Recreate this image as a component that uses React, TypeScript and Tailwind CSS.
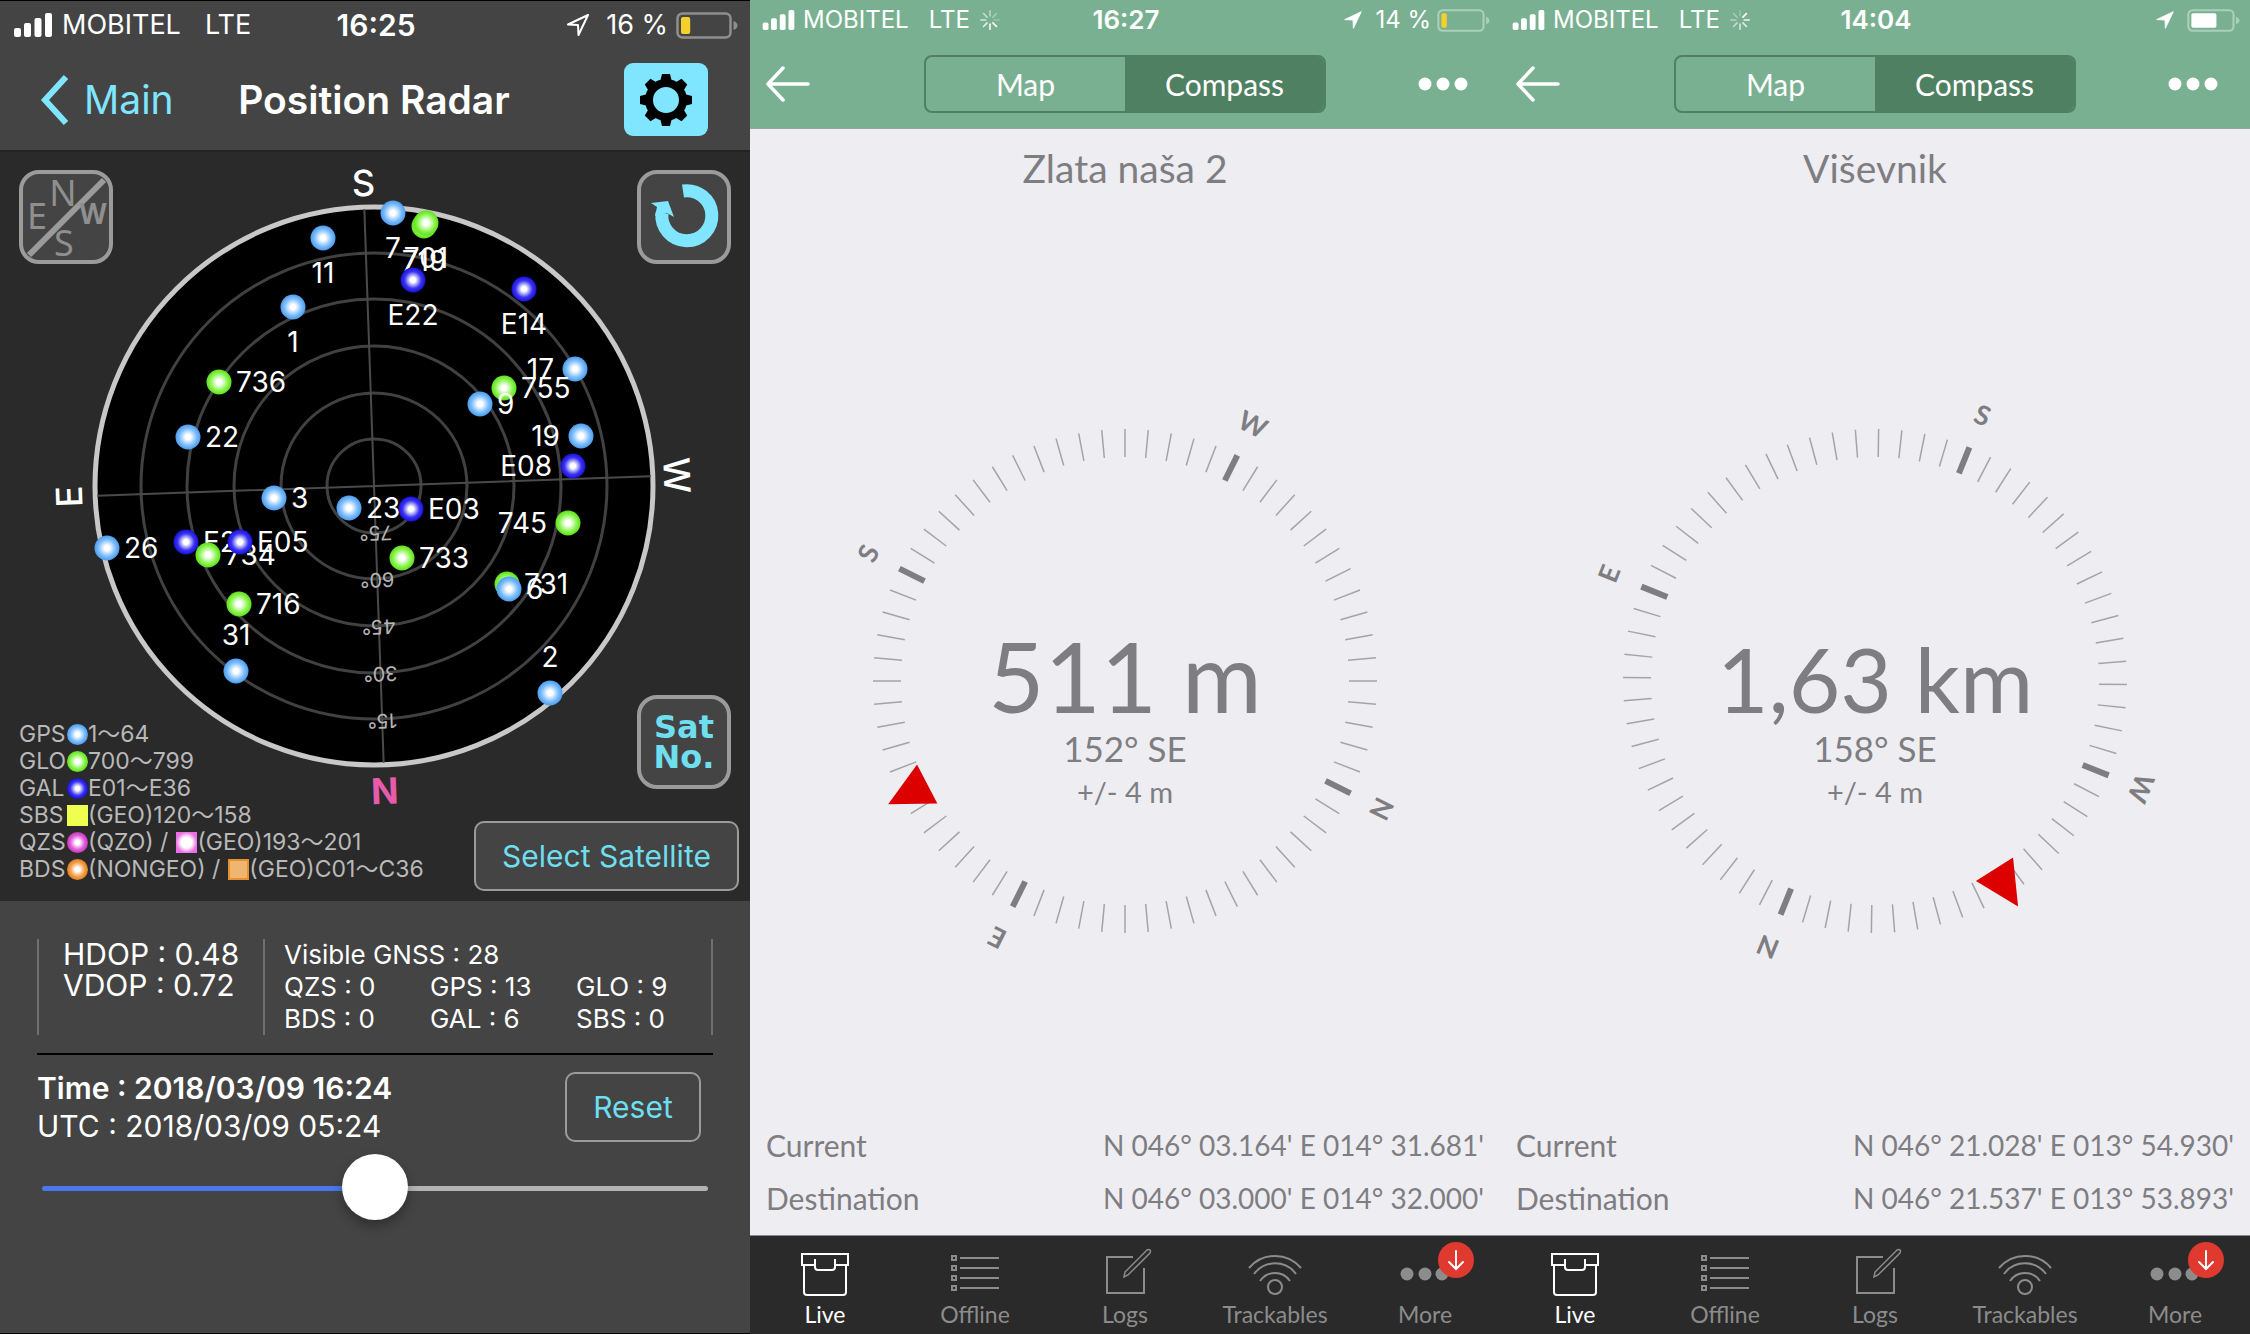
import type { ReactNode } from 'react'

type Kind = 'gps' | 'glo' | 'gal'
type Side = 'left' | 'right' | 'above' | 'below'

interface Satellite {
  id: string
  kind: Kind
  x: number
  y: number
  side: Side
}

// Painted in this order, later ones cover earlier ones
const satellites: Satellite[] = [
  { id: '7', kind: 'gps', x: 393, y: 61, side: 'below' },
  { id: '719', kind: 'glo', x: 424, y: 74, side: 'below' },
  { id: '701', kind: 'glo', x: 426, y: 71, side: 'below' },
  { id: 'E22', kind: 'gal', x: 413, y: 128, side: 'below' },
  { id: '11', kind: 'gps', x: 323, y: 86, side: 'below' },
  { id: 'E14', kind: 'gal', x: 524, y: 137, side: 'below' },
  { id: '1', kind: 'gps', x: 293, y: 155, side: 'below' },
  { id: '736', kind: 'glo', x: 219, y: 230, side: 'right' },
  { id: '22', kind: 'gps', x: 188, y: 285, side: 'right' },
  { id: '17', kind: 'gps', x: 575, y: 217, side: 'left' },
  { id: '755', kind: 'glo', x: 504, y: 236, side: 'right' },
  { id: '9', kind: 'gps', x: 480, y: 252, side: 'right' },
  { id: '19', kind: 'gps', x: 581, y: 284, side: 'left' },
  { id: 'E08', kind: 'gal', x: 573, y: 314, side: 'left' },
  { id: '3', kind: 'gps', x: 274, y: 346, side: 'right' },
  { id: '23', kind: 'gps', x: 349, y: 356, side: 'right' },
  { id: 'E03', kind: 'gal', x: 411, y: 357, side: 'right' },
  { id: '745', kind: 'glo', x: 568, y: 371, side: 'left' },
  { id: '26', kind: 'gps', x: 107, y: 396, side: 'right' },
  { id: 'E21', kind: 'gal', x: 186, y: 390, side: 'right' },
  { id: '734', kind: 'glo', x: 208, y: 403, side: 'right' },
  { id: 'E05', kind: 'gal', x: 240, y: 390, side: 'right' },
  { id: '733', kind: 'glo', x: 402, y: 406, side: 'right' },
  { id: '731', kind: 'glo', x: 507, y: 432, side: 'right' },
  { id: '6', kind: 'gps', x: 509, y: 437, side: 'right' },
  { id: '716', kind: 'glo', x: 239, y: 452, side: 'right' },
  { id: '31', kind: 'gps', x: 236, y: 519, side: 'above' },
  { id: '2', kind: 'gps', x: 550, y: 541, side: 'above' },
]

const fills: Record<Kind, string> = {
  gps: 'url(#gps)',
  glo: 'url(#glo)',
  gal: 'url(#gal)',
}

function SatelliteMark({ id, kind, x, y, side }: Satellite) {
  const dx = side === 'left' ? -21 : side === 'right' ? 17 : 0
  const dy = side === 'above' ? -26 : side === 'below' ? 45 : 10
  const anchor = side === 'left' ? 'end' : side === 'right' ? 'start' : 'middle'
  return (
    <g>
      <circle cx={x} cy={y} r="12.5" fill={fills[kind]} />
      <text x={x + dx} y={y + dy} textAnchor={anchor} fontSize="28" fill="#fff">
        {id}
      </text>
    </g>
  )
}

function Glow({ id, edge, mid }: { id: string; edge: string; mid: string }) {
  return (
    <radialGradient id={id}>
      <stop offset="0.2" stopColor="#fff" />
      <stop offset="0.68" stopColor={mid} />
      <stop offset="1" stopColor={edge} />
    </radialGradient>
  )
}

function Radar() {
  return (
    <svg viewBox="0 0 750 749" className="block w-full" role="img" aria-label="Satellite positions">
      <defs>
        <Glow id="gps" edge="#4a9cf0" mid="#7dbdfb" />
        <Glow id="glo" edge="#5ee01c" mid="#8cf551" />
        <Glow id="gal" edge="#1a10d8" mid="#3a33f2" />
      </defs>
      <g transform="translate(374 334)">
        <circle r="279" fill="#000" stroke="#c8c8c8" strokeWidth="5" />
        <g fill="none" stroke="#414141" strokeWidth="3">
          {[47, 93, 140, 187, 233].map(r => (
            <circle key={r} r={r} />
          ))}
        </g>
        {/* North points down, two degrees off the vertical */}
        <g transform="rotate(178)" textAnchor="middle">
          <path d="M0-277V277M-277 0H277" stroke="#4a4a4a" strokeWidth="2" />
          {[75, 60, 45, 30, 15].map((deg, i) => (
            <text key={deg} y={-40 - i * 47} fontSize="20" fill="#b4b4b4">
              {deg}°
            </text>
          ))}
        </g>
        <g fontSize="36" fill="#fff" textAnchor="middle" fontWeight="500">
          <text transform="rotate(-2)" y="-290">S</text>
          <text transform="rotate(-92)" y="-292">E</text>
          <text transform="rotate(88)" y="-290">W</text>
          <text transform="rotate(178)" y="-292" fill="#e65bab" fontWeight="700">N</text>
        </g>
      </g>
      {satellites.map(s => (
        <SatelliteMark key={s.id} {...s} />
      ))}
    </svg>
  )
}

function Signal({ className }: { className: string }) {
  return (
    <svg viewBox="0 0 38 24" className={className} fill="currentColor" aria-hidden="true">
      <rect x="0" y="15" width="7" height="9" rx="2" />
      <rect x="10" y="10" width="7" height="14" rx="2" />
      <rect x="20.500" y="5" width="7" height="19" rx="2" />
      <rect x="31" y="0" width="7" height="24" rx="2" />
    </svg>
  )
}

function Battery({ level, color, frame, className }: { level: number; color: string; frame: string; className: string }) {
  return (
    <svg viewBox="0 0 62 27" className={className} aria-hidden="true">
      <rect x="1.500" y="1.500" width="53" height="24" rx="5" fill="none" stroke={frame} strokeWidth="2.500" />
      <path d="M57.500 9v9c2.500-1 4-2.500 4-4.500s-1.500-3.500-4-4.500z" fill={frame} />
      <rect x="5" y="5" width={46 * level} height="17" rx="2" fill={color} />
    </svg>
  )
}

function LocationArrow({ filled, className }: { filled?: boolean; className: string }) {
  return (
    <svg viewBox="0 0 24 24" className={className} aria-hidden="true">
      <path
        d="M22 2 2 11.500l10 .5.500 10z"
        fill={filled ? 'currentColor' : 'none'}
        stroke="currentColor"
        strokeWidth={filled ? 1 : 2}
        strokeLinejoin="round"
      />
    </svg>
  )
}

function Spinner({ turn }: { turn: number }) {
  return (
    <svg viewBox="-12 -12 24 24" className="ml-2.5 size-5" aria-hidden="true">
      {[0, 1, 2, 3, 4, 5, 6, 7].map(i => (
        <path
          key={i}
          d="M0-5V-11"
          transform={`rotate(${i * 45 + turn})`}
          stroke="#fff"
          strokeWidth="2"
          strokeLinecap="round"
          opacity={1 - i * 0.11}
        />
      ))}
    </svg>
  )
}

function SquareButton({ label, children }: { label: string; children: ReactNode }) {
  return (
    <button
      type="button"
      aria-label={label}
      className="pointer-events-auto size-[94px] shrink-0 rounded-[20px] border-4 border-[#9b9b9b] bg-[#444444]"
    >
      {children}
    </button>
  )
}

function Dot({ className }: { className: string }) {
  return <span className={`inline-block size-[21px] shrink-0 ${className}`} />
}

function LegendRow({ name, children }: { name: string; children: ReactNode }) {
  return (
    <li className="flex items-center">
      <span className="w-12">{name}</span>
      {children}
    </li>
  )
}

function Legend() {
  return (
    <ul className="mb-2 text-[23px] leading-[27px] text-[#b9b9b9]">
      <LegendRow name="GPS">
        <Dot className="rounded-full bg-[radial-gradient(closest-side,#fff_20%,#7dbdfb_68%,#4a9cf0)]" />
        <span>1〜64</span>
      </LegendRow>
      <LegendRow name="GLO">
        <Dot className="rounded-full bg-[radial-gradient(closest-side,#fff_20%,#8cf551_68%,#5ee01c)]" />
        <span>700〜799</span>
      </LegendRow>
      <LegendRow name="GAL">
        <Dot className="rounded-full bg-[radial-gradient(closest-side,#fff_20%,#3a33f2_68%,#1a10d8)]" />
        <span>E01〜E36</span>
      </LegendRow>
      <LegendRow name="SBS">
        <Dot className="bg-[#eeff50]" />
        <span>(GEO)120〜158</span>
      </LegendRow>
      <LegendRow name="QZS">
        <Dot className="rounded-full bg-[radial-gradient(closest-side,#fff_20%,#e55bdc_68%,#c03cb8)]" />
        <span>(QZO) /</span>
        <Dot className="ml-2 bg-[radial-gradient(closest-side,#fff_50%,#ec6fe4)]" />
        <span>(GEO)193〜201</span>
      </LegendRow>
      <LegendRow name="BDS">
        <Dot className="rounded-full bg-[radial-gradient(closest-side,#fff_20%,#f3a04a_68%,#e08020)]" />
        <span>(NONGEO) /</span>
        <Dot className="ml-2 border-2 border-[#e8902e] bg-[#efb672]" />
        <span>(GEO)C01〜C36</span>
      </LegendRow>
    </ul>
  )
}

function RadarPhone() {
  return (
    <section className="flex flex-col border-y border-black bg-[#444444] font-['Inter','Noto_Sans_CJK_JP',sans-serif] text-white">
      <header className="border-b-2 border-[#222222]">
        <div className="grid grid-cols-[1fr_auto_1fr] items-center pt-1.5 pr-3 pl-3.5 text-[27px] leading-9">
          <div className="flex items-center">
            <Signal className="mr-2.5 h-6 w-[38px]" />
            <span>MOBITEL</span>
            <span className="ml-6">LTE</span>
          </div>
          <span className="text-[30px] font-semibold">16:25</span>
          <div className="flex items-center justify-end">
            <LocationArrow className="mr-4 size-6" />
            <span>16 %</span>
            <Battery level={0.2} color="#f5cf2b" frame="#8f8f8f" className="ml-2 h-[27px] w-[62px]" />
          </div>
        </div>
        <div className="grid grid-cols-[1fr_auto_1fr] items-center pt-5 pr-[42px] pb-3.5 pl-10">
          <button type="button" className="flex items-center gap-4 text-[39px] leading-12 text-[#80e5ff]">
            <svg viewBox="0 0 28 50" className="h-[50px] w-7" fill="none" stroke="currentColor" strokeWidth="6" aria-hidden="true">
              <path d="M26 2 5 25l21 23" />
            </svg>
            Main
          </button>
          <h1 className="text-[39px] leading-12 font-semibold">Position Radar</h1>
          <button
            type="button"
            aria-label="Settings"
            className="flex h-[73px] w-[84px] items-center justify-center justify-self-end rounded-[9px] bg-[#80e5ff]"
          >
            <svg viewBox="-26 -26 52 52" className="size-[52px]" aria-hidden="true">
              <circle r="17" fill="none" stroke="#000" strokeWidth="8" />
              {[0, 45, 90, 135, 180, 225, 270, 315].map(a => (
                <path key={a} d="M-6-18-4-26H4L6-18z" transform={`rotate(${a})`} />
              ))}
            </svg>
          </button>
        </div>
      </header>

      <div className="relative bg-[#2a2a2a]">
        <Radar />
        <div className="pointer-events-none absolute inset-0 flex flex-col justify-between pt-[18px] pr-[19px] pb-2.5 pl-[19px]">
          <div className="flex justify-between">
            <SquareButton label="Compass orientation">
              <svg viewBox="0 0 86 86" className="size-full font-['Noto_Sans',sans-serif]" fill="#8f8f8f" textAnchor="middle" aria-hidden="true">
                <path d="M6 81 81 6" stroke="#9b9b9b" strokeWidth="6" />
                <text x="40" y="32" fontSize="36">N</text>
                <text x="14" y="55" fontSize="36">E</text>
                <text x="41" y="82" fontSize="36">S</text>
                <text x="70" y="50" fontSize="28" fontWeight="700">W</text>
              </svg>
            </SquareButton>
            <SquareButton label="Reload">
              <svg viewBox="0 0 86 86" className="size-full" aria-hidden="true">
                <path d="M42 17A25 25 0 1 1 21 39" fill="none" stroke="#80e5ff" strokeWidth="13" />
                <path d="M10 29 27 27 33 43 26 39 14 42 16 33z" fill="#80e5ff" />
              </svg>
            </SquareButton>
          </div>
          <div>
            <div className="flex items-start justify-end">
              <SquareButton label="Sat No.">
                <span className="block font-['DejaVu_Sans',sans-serif] text-[32px] leading-[30px] font-bold text-[#6fdff0]">
                  Sat
                  <br />
                  No.
                </span>
              </SquareButton>
            </div>
            <div className="-mt-[68px] flex items-end justify-between">
              <Legend />
              <button
                type="button"
                className="pointer-events-auto -mr-2 h-[70px] w-[265px] shrink-0 rounded-[10px] border-2 border-[#9b9b9b] bg-[#444444] text-[30px] text-[#6fdff0]"
              >
                Select Satellite
              </button>
            </div>
          </div>
        </div>
      </div>

      <div className="px-[37px] pt-[38px]">
        <div className="grid grid-cols-[224px_1fr] border-x-2 border-[#707070]">
          <div className="pl-6 text-[30px] leading-[31px]">
            <p>HDOP : 0.48</p>
            <p>VDOP : 0.72</p>
          </div>
          <div className="grid grid-cols-[146px_146px_1fr] border-l-2 border-[#707070] pl-[19px] text-[26px] leading-8">
            <p className="col-span-3">Visible GNSS : 28</p>
            <p>QZS : 0</p>
            <p>GPS : 13</p>
            <p>GLO : 9</p>
            <p>BDS : 0</p>
            <p>GAL : 6</p>
            <p>SBS : 0</p>
          </div>
        </div>
        <hr className="mt-[18px] border-t-2 border-black" />
        <div className="mt-3.5 flex items-center justify-between pr-3">
          <div className="text-[30px] leading-[38px]">
            <p className="font-semibold">Time : 2018/03/09 16:24</p>
            <p>UTC : 2018/03/09 05:24</p>
          </div>
          <button type="button" className="h-[70px] w-[136px] rounded-[10px] border-2 border-[#9b9b9b] text-[30px] text-[#6fdff0]">
            Reset
          </button>
        </div>
        <div className="mt-2.5 px-[5px]">
          <input
            type="range"
            aria-label="Time offset"
            defaultValue={50}
            className="block h-[66px] w-full appearance-none bg-transparent [&::-webkit-slider-runnable-track]:h-[5px] [&::-webkit-slider-runnable-track]:rounded-full [&::-webkit-slider-runnable-track]:bg-[linear-gradient(to_right,#4a76ee_50%,#b3b3b3_50%)] [&::-webkit-slider-thumb]:-mt-8 [&::-webkit-slider-thumb]:size-[66px] [&::-webkit-slider-thumb]:appearance-none [&::-webkit-slider-thumb]:rounded-full [&::-webkit-slider-thumb]:bg-white [&::-webkit-slider-thumb]:shadow-[0_6px_12px_rgba(0,0,0,0.3)]"
          />
        </div>
      </div>
    </section>
  )
}

interface CompassData {
  time: string
  battery: string | null
  spin: number
  title: string
  distance: string
  distanceSize: number
  bearing: string
  rotation: number
  letters: string[]
  target: number
  current: string
  destination: string
}

const compasses: CompassData[] = [
  {
    time: '16:27',
    battery: '14 %',
    spin: 135,
    title: 'Zlata naša 2',
    distance: '511 m',
    distanceSize: 97,
    bearing: '152° SE',
    rotation: 26.47,
    letters: ['W', 'N', 'E', 'S'],
    target: 242.5,
    current: "N 046° 03.164' E 014° 31.681'",
    destination: "N 046° 03.000' E 014° 32.000'",
  },
  {
    time: '14:04',
    battery: null,
    spin: 45,
    title: 'Viševnik',
    distance: '1,63 km',
    distanceSize: 89,
    bearing: '158° SE',
    rotation: 22,
    letters: ['S', 'W', 'N', 'E'],
    target: 147.6,
    current: "N 046° 21.028' E 013° 54.930'",
    destination: "N 046° 21.537' E 013° 53.893'",
  },
]

const TICKS = 68

function Dial({ data }: { data: CompassData }) {
  return (
    <svg viewBox="-300 -300 600 600" className="block w-4/5" fill="#7e7d82" textAnchor="middle" role="img" aria-label={`${data.distance}, ${data.bearing}`}>
      <g transform={`rotate(${data.rotation})`}>
        {Array.from({ length: TICKS }, (_, i) => {
          const major = i % (TICKS / 4) === 0
          return (
            <path
              key={i}
              d="M0-252V-224"
              transform={`rotate(${(i * 360) / TICKS})`}
              stroke={major ? '#7e7d82' : '#a3a3a8'}
              strokeWidth={major ? 6 : 1.5}
            />
          )
        })}
        {data.letters.map((letter, i) => (
          <text key={letter} y="-277" transform={`rotate(${i * 90})`} fontSize="27" fontWeight="700">
            {letter}
          </text>
        ))}
      </g>
      <path d="M0-267-22-223H22z" transform={`rotate(${data.target})`} fill="#dc0000" />
      <text y="32" fontSize={data.distanceSize}>{data.distance}</text>
      <text y="81" fontSize="35">{data.bearing}</text>
      <text y="122" fontSize="29">+/- 4 m</text>
    </svg>
  )
}

function BoxIcon() {
  return (
    <svg viewBox="0 0 54 50" className="h-[50px] w-[54px]" fill="none" stroke="currentColor" strokeWidth="2" aria-hidden="true">
      <path d="M17 17H4V6h46v11H37" />
      <path d="M6 17v27q0 3 3 3h36q3 0 3-3V17M17 11v8q0 3 3 3h14q3 0 3-3v-8" />
    </svg>
  )
}

function ListIcon() {
  return (
    <svg viewBox="0 0 54 50" className="h-[50px] w-[54px]" fill="none" stroke="currentColor" strokeWidth="2" aria-hidden="true">
      {[10, 20, 30, 40].map(y => (
        <g key={y}>
          <rect x="4" y={y - 2} width="4" height="4" />
          <path d={`M12 ${y}h39`} />
        </g>
      ))}
    </svg>
  )
}

function EditIcon() {
  return (
    <svg viewBox="0 0 54 50" className="h-[50px] w-[54px]" fill="none" stroke="currentColor" strokeWidth="2" aria-hidden="true">
      <path d="M35 9H9v36h37V20" />
      <path d="M26 29 27 24 49 2q2-1 3 0t0 3L30 27z" strokeWidth="1.500" />
    </svg>
  )
}

function BeaconIcon() {
  return (
    <svg viewBox="0 0 54 50" className="h-[50px] w-[54px]" fill="none" stroke="currentColor" strokeWidth="2" aria-hidden="true">
      <circle cx="27" cy="39" r="7" />
      <path d="M12 33a18 18 0 0 1 30 0M6 26a26 26 0 0 1 42 0M1 20a34 34 0 0 1 52 0" />
    </svg>
  )
}

function MoreIcon() {
  return (
    <span className="relative block">
      <svg viewBox="0 0 54 50" className="h-[50px] w-[54px]" fill="currentColor" aria-hidden="true">
        <circle cx="9" cy="26" r="6.500" />
        <circle cx="27" cy="26" r="6.500" />
        <circle cx="44" cy="26" r="6.500" />
      </svg>
      <svg viewBox="0 0 36 36" className="absolute -top-1.5 left-10 size-9" fill="none" stroke="#fff" strokeWidth="2" strokeLinecap="round" aria-hidden="true">
        <circle cx="18" cy="18" r="18" fill="#e0392f" stroke="none" />
        <path d="M18 9v17M11 20l7 7 7-7" />
      </svg>
    </span>
  )
}

const tabs = [
  { label: 'Live', icon: <BoxIcon /> },
  { label: 'Offline', icon: <ListIcon /> },
  { label: 'Logs', icon: <EditIcon /> },
  { label: 'Trackables', icon: <BeaconIcon /> },
  { label: 'More', icon: <MoreIcon /> },
]

function CompassPhone({ data }: { data: CompassData }) {
  return (
    <section className="flex flex-col bg-[#eeeef2] font-['Lato',sans-serif] text-[#7e7d82]">
      <header className="border-b border-[#9aa5a0] bg-[#7ab092] text-white">
        <div className="grid grid-cols-[1fr_auto_1fr] items-center pt-1 pr-2.5 pl-3 font-['Inter',sans-serif] text-[24px] leading-8">
          <div className="flex items-center">
            <Signal className="mr-2 h-5 w-[33px]" />
            <span>MOBITEL</span>
            <span className="ml-5">LTE</span>
            <Spinner turn={data.spin} />
          </div>
          <span className="text-[26px] font-semibold">{data.time}</span>
          <div className="flex items-center justify-end">
            <LocationArrow filled className="mr-3 size-5" />
            {data.battery && <span className="mr-1.5">{data.battery}</span>}
            <Battery
              level={data.battery ? 0.14 : 0.64}
              color={data.battery ? '#f5cf2b' : '#fff'}
              frame="#a9d0b9"
              className="h-[23px] w-[53px]"
            />
          </div>
        </div>
        <div className="grid grid-cols-[1fr_402px_1fr] items-center px-4 pt-[19px] pb-[15px]">
          <button type="button" aria-label="Back" className="justify-self-start">
            <svg viewBox="0 0 44 38" className="h-[38px] w-11" fill="none" stroke="currentColor" strokeWidth="3.500" strokeLinecap="round" strokeLinejoin="round" aria-hidden="true">
              <path d="M42 19H2M17 3 2 19l15 16" />
            </svg>
          </button>
          <div className="flex h-[58px] overflow-hidden rounded-lg border-2 border-[#4e8061] text-[30px]">
            <button type="button" className="flex-1">Map</button>
            <button type="button" aria-pressed="true" className="flex-1 bg-[#4e8061]">Compass</button>
          </div>
          <button type="button" aria-label="More options" className="mr-4 justify-self-end">
            <svg viewBox="0 0 50 14" className="h-3.5 w-[50px]" fill="currentColor" aria-hidden="true">
              <circle cx="7" cy="7" r="6.500" />
              <circle cx="25" cy="7" r="6.500" />
              <circle cx="43" cy="7" r="6.500" />
            </svg>
          </button>
        </div>
      </header>

      <h2 className="pt-4 pb-5 text-center text-[39px] leading-[46px]">{data.title}</h2>
      <div className="flex flex-1 items-center justify-center pt-8">
        <Dial data={data} />
      </div>
      <dl className="grid grid-cols-[auto_1fr] px-4 pb-2.5 text-[28px] leading-[53px]">
        <dt className="text-[30px]">Current</dt>
        <dd className="text-right">{data.current}</dd>
        <dt className="text-[30px]">Destination</dt>
        <dd className="text-right">{data.destination}</dd>
      </dl>

      <nav className="grid grid-cols-5 border-t border-[#8a8a8a] bg-[#2a2a2a] pt-3 pb-[3px] text-[23px] leading-[33px]">
        {tabs.map((tab, i) => (
          <a
            key={tab.label}
            href="#"
            className={`flex flex-col items-center ${i === 0 ? 'text-white' : 'text-[#8c8c8c]'}`}
          >
            {tab.icon}
            {tab.label}
          </a>
        ))}
      </nav>
    </section>
  )
}

export default function App() {
  return (
    <main className="grid min-h-screen grid-cols-3">
      <RadarPhone />
      {compasses.map(data => (
        <CompassPhone key={data.title} data={data} />
      ))}
    </main>
  )
}
